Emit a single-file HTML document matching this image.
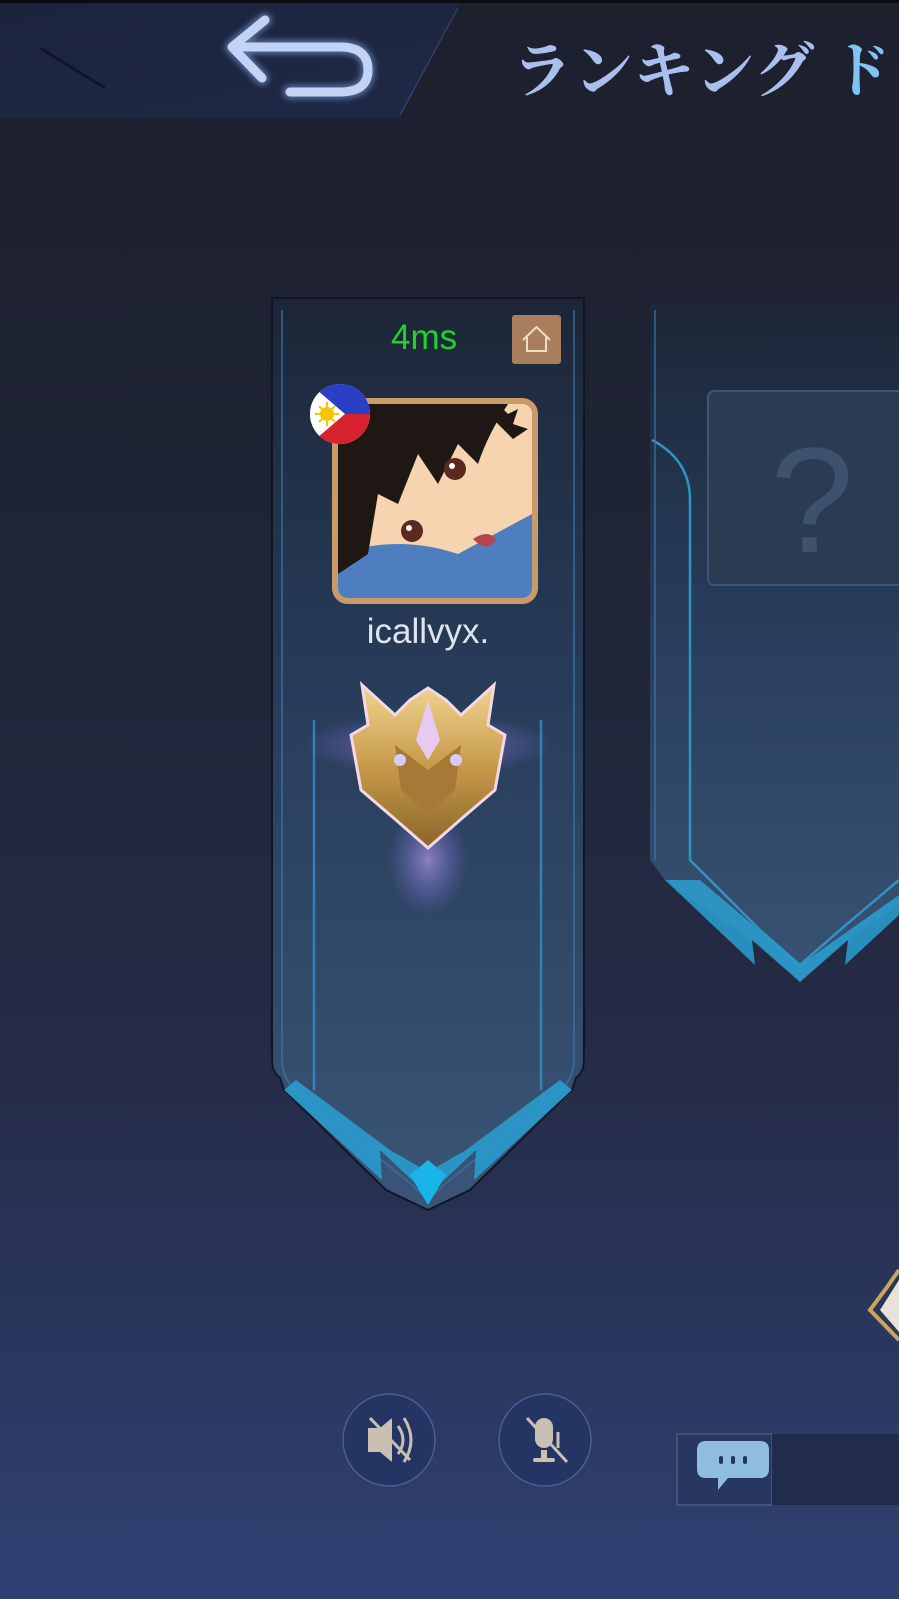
<!DOCTYPE html>
<html><head><meta charset="utf-8"><style>
html,body{margin:0;padding:0}
body{width:899px;height:1599px;overflow:hidden;position:relative;font-family:"Liberation Sans","Noto Sans CJK JP",sans-serif;background:linear-gradient(180deg,#1d202d 0%,#1f2434 30%,#242b45 65%,#2c3a66 90%,#2f4173 100%);}
.abs{position:absolute}
</style></head><body>
<svg class="abs" style="left:0;top:0" width="899" height="1599" viewBox="0 0 899 1599">
<defs>
<linearGradient id="cg" x1="0" y1="0" x2="0" y2="1"><stop offset="0" stop-color="#1d2638"/><stop offset="0.4" stop-color="#263b58"/><stop offset="1" stop-color="#3a5577"/></linearGradient>
<linearGradient id="hg" x1="0" y1="0" x2="1" y2="1"><stop offset="0" stop-color="#1c2540"/><stop offset="1" stop-color="#1f2b4c"/></linearGradient>
<radialGradient id="glow" cx="0.5" cy="0.5" r="0.5"><stop offset="0" stop-color="#c7a8ff" stop-opacity="0.6"/><stop offset="1" stop-color="#8a70ff" stop-opacity="0"/></radialGradient>
<linearGradient id="gold" x1="0" y1="0" x2="0" y2="1"><stop offset="0" stop-color="#f0d490"/><stop offset="0.5" stop-color="#c79a4a"/><stop offset="1" stop-color="#8a6428"/></linearGradient>
<filter id="bl" x="-20%" y="-20%" width="140%" height="140%"><feGaussianBlur stdDeviation="3"/></filter>
</defs>
<path d="M0 2 L460 2 L400 118 L0 118 Z" fill="url(#hg)" opacity="0.8"/>
<rect x="0" y="0" width="899" height="3" fill="#0a0c12"/>
<path d="M458 8 L400 115" stroke="#3c5a9a" stroke-width="1.5" opacity="0.5"/>
<path d="M40 48 L105 88" stroke="#10152a" stroke-width="3"/>
<g fill="none" stroke="#7f9fe0" stroke-width="14" stroke-linejoin="round" stroke-linecap="round" filter="url(#bl)" opacity="0.6">
<path d="M265 20 L232 47 L262 78"/><path d="M236 47 L340 47 Q368 47 368 70 Q368 92 340 92 L290 92"/></g>
<g fill="none" stroke="#c3d3f5" stroke-width="9" stroke-linejoin="round" stroke-linecap="round">
<path d="M265 20 L232 47 L262 78"/><path d="M236 47 L340 47 Q368 47 368 70 Q368 92 340 92 L290 92"/></g>
<g>
<path d="M272 298 L584 298 L584 1060 Q584 1072 576 1078 L572 1090 L470 1190 L428 1210 L386 1190 L284 1090 L280 1078 Q272 1072 272 1060 Z" fill="url(#cg)" stroke="#0f1726" stroke-width="2"/>
<path d="M282 310 L282 1060 Q282 1080 300 1095 L410 1183 L428 1200 L446 1183 L556 1095 Q574 1080 574 1060 L574 310" fill="none" stroke="#3a7aa8" stroke-width="2" opacity="0.6"/>
<path d="M314 720 L314 1090 M541 720 L541 1090" stroke="#2f93c3" stroke-width="2.5" opacity="0.8"/>
<path d="M284 1090 L382 1180 L380 1150 L428 1195 L476 1150 L474 1180 L572 1090 L560 1080 L466 1150 L440 1165 L428 1172 L416 1165 L390 1150 L296 1080 Z" fill="#2aa0d2" opacity="0.85"/>
<path d="M410 1175 L428 1160 L446 1175 L428 1205 Z" fill="#19b4e8"/>
</g>
<g>
<path d="M650 300 L899 300 L899 905 L840 945 L800 982 L760 945 L700 905 L665 880 L650 860 Z" fill="url(#cg)" opacity="0.95"/>
<path d="M652 440 Q690 460 690 500 L690 860 L760 930 L800 965 L840 930 L899 880" fill="none" stroke="#2f93c3" stroke-width="2.5"/>
<path d="M655 310 L655 860" stroke="#3a7aa8" stroke-width="2" opacity="0.6"/>
<path d="M665 880 L755 965 L752 940 L800 982 L848 940 L845 965 L899 915 L899 895 L800 965 L700 880 Z" fill="#2aa0d2" opacity="0.85"/>
<rect x="708" y="391" width="200" height="194" rx="6" fill="#2a3b52" stroke="#3c5673" stroke-width="2"/>
<text x="812" y="552" font-size="150" fill="#3d526c" text-anchor="middle" font-family="Liberation Sans">?</text>
</g>
<ellipse cx="428" cy="745" rx="130" ry="32" fill="url(#glow)"/>
<ellipse cx="428" cy="860" rx="40" ry="55" fill="url(#glow)"/>
<path d="M362 685 L395 715 L410 700 L428 688 L446 700 L461 715 L494 685 L488 725 L505 735 L495 790 L460 820 L428 848 L396 820 L361 790 L351 735 L368 725 Z" fill="url(#gold)" stroke="#f3d8e6" stroke-width="3"/>
<path d="M428 700 L440 740 L428 760 L416 740 Z" fill="#e8c9f0"/>
<path d="M395 745 L428 770 L461 745 L455 790 L428 815 L401 790 Z" fill="#a67a36"/>
<circle cx="400" cy="760" r="6" fill="#d7ccff"/><circle cx="456" cy="760" r="6" fill="#d7ccff"/>
<circle cx="389" cy="1440" r="46" fill="#243463" stroke="#4a5f95" stroke-width="1.5"/>
<circle cx="545" cy="1440" r="46" fill="#243463" stroke="#4a5f95" stroke-width="1.5"/>
<path d="M368 1428 L380 1428 L392 1418 L392 1462 L380 1452 L368 1452 Z" fill="#c9bfb3"/>
<g fill="none" stroke="#c9bfb3" stroke-width="3">
<path d="M398 1426 Q408 1440 398 1454"/><path d="M404 1418 Q418 1440 404 1462"/>
<path d="M370 1418 L410 1460"/></g>
<g fill="#c9bfb3"><rect x="535" y="1418" width="18" height="30" rx="9"/><rect x="541" y="1450" width="6" height="10"/><rect x="533" y="1458" width="22" height="4" rx="2"/></g>
<path d="M558 1432 L558 1448" stroke="#c9bfb3" stroke-width="3"/>
<path d="M527 1418 L567 1462" stroke="#c9bfb3" stroke-width="3"/>
<rect x="677" y="1434" width="95" height="71" fill="#283760" stroke="#4a5a80" stroke-width="1.5"/>
<rect x="772" y="1434" width="127" height="71" fill="#212b4b"/>
<path d="M706 1441 L760 1441 Q769 1441 769 1450 L769 1469 Q769 1478 760 1478 L728 1478 L718 1490 L718 1478 L706 1478 Q697 1478 697 1469 L697 1450 Q697 1441 706 1441 Z" fill="#8fbde0"/>
<g fill="#243463"><rect x="719" y="1456" width="4" height="8" rx="2"/><rect x="731" y="1456" width="4" height="8" rx="2"/><rect x="743" y="1456" width="4" height="8" rx="2"/></g>
<path d="M899 1270 L885 1290 L870 1310 L899 1340" fill="none" stroke="#c9a45a" stroke-width="4"/>
<path d="M899 1280 L880 1310 L899 1332 Z" fill="#e8e2d8"/>
</svg>
<div class="abs" style="left:512px;top:24px;font-size:60px;font-weight:bold;color:#a9c0ef;font-family:'Noto Serif CJK SC','Liberation Serif',serif;letter-spacing:1px;white-space:nowrap">ランキング <span style="color:#7fc4f2">ド</span></div>
<div class="abs" style="left:391px;top:318px;font-size:35px;color:#1fd32a">4ms</div>
<div class="abs" style="left:512px;top:315px;width:49px;height:49px;background:#a97e5d;border-radius:3px">
<svg width="49" height="49" viewBox="0 0 49 49"><path d="M11 25 L24.5 12 L38 25 M15 22 L15 36 L34 36 L34 22" fill="none" stroke="#f1dcc7" stroke-width="2"/></svg></div>
<div class="abs" style="left:332px;top:398px;width:206px;height:206px;box-sizing:border-box;border:6px solid #c99b6b;border-radius:16px;overflow:hidden;background:#f5d4b1">
<svg width="194" height="194" viewBox="0 0 194 194">
<rect width="194" height="194" fill="#f6d4b0"/>
<path d="M0 150 Q60 130 120 150 L194 110 L194 194 L0 194 Z" fill="#4f7ec0"/>
<path d="M0 0 L170 0 Q150 30 140 60 L120 40 L100 80 L80 50 L60 100 L40 90 L30 150 L0 170 Z" fill="#1e1713"/>
<path d="M150 10 L160 0 L170 10 L180 5 L175 20 L190 25 L175 35" fill="#1e1713"/>
<circle cx="117" cy="65" r="11" fill="#5a2a1e"/><circle cx="74" cy="127" r="11" fill="#5a2a1e"/>
<circle cx="114" cy="62" r="3" fill="#fff"/><circle cx="71" cy="124" r="3" fill="#fff"/>
<path d="M135 135 Q150 125 158 135 Q150 150 135 135 Z" fill="#b34650"/>
</svg></div>
<div class="abs" style="left:310px;top:384px;width:60px;height:60px;border-radius:50%;overflow:hidden;background:#fff">
<svg width="60" height="60" viewBox="0 0 60 60"><path d="M0 0 L60 0 L60 30 L30 30 Z" fill="#2b3fc4"/><path d="M0 60 L60 60 L60 30 L30 30 Z" fill="#d8222f"/><path d="M0 0 L35 30 L0 60 Z" fill="#fff"/><circle cx="17" cy="30" r="7" fill="#f6c500"/><g stroke="#f6c500" stroke-width="2"><path d="M5 30 L29 30 M17 18 L17 42 M9 22 L25 38 M25 22 L9 38"/></g></svg></div>
<div class="abs" style="left:300px;top:612px;width:256px;text-align:center;font-size:35px;color:#dfe4ee">icallvyx.</div>
</body></html>
